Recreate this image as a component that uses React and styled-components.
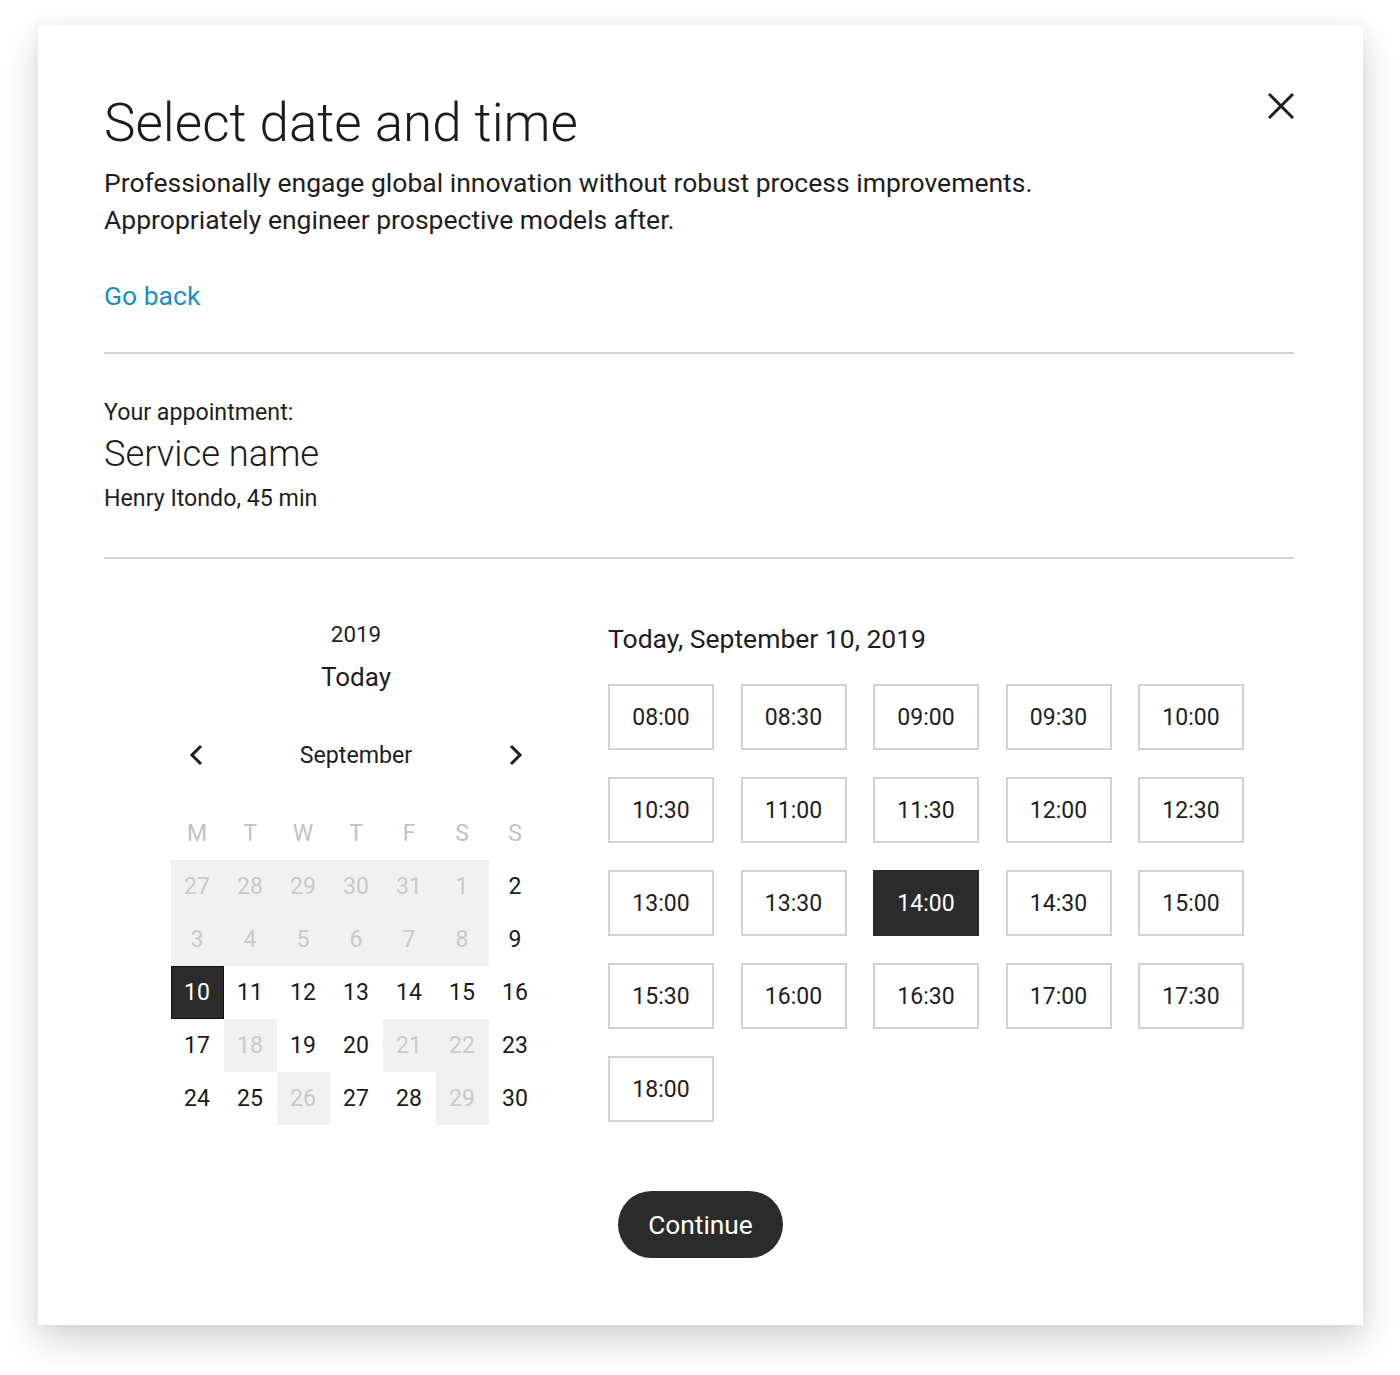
import React from "react";
import styled, { createGlobalStyle } from "styled-components";

const Global = createGlobalStyle`
  html, body { margin: 0; padding: 0; background: #ffffff; }
  body { font-family: Roboto, "Noto Sans", "Liberation Sans", sans-serif; color: #1e1e1e; }
  * { box-sizing: border-box; }
`;

const Page = styled.div`
  padding: 25px 0 50px 38px;
`;

const Card = styled.div`
  width: 1325px;
  background: #ffffff;
  padding: 67px 69px 67px 66px;
  box-shadow: 0 16px 34px rgba(0, 0, 0, 0.16), 0 0 16px rgba(0, 0, 0, 0.06);
  display: flex;
  flex-direction: column;
`;

const Header = styled.div`
  display: flex;
  justify-content: space-between;
  align-items: flex-start;
`;

const Intro = styled.div`
  display: flex;
  flex-direction: column;
`;

const Title = styled.h1`
  margin: 0;
  font-size: 53px;
  line-height: 62px;
  font-weight: 300;
  color: #1c1c1c;
`;

const Lead = styled.p`
  margin: 10px 0 0;
  font-size: 26.5px;
  line-height: 37px;
  font-weight: 400;
  color: #1e1e1e;
`;

const BackLink = styled.a`
  margin-top: 40px;
  font-size: 26.5px;
  line-height: 36px;
  color: #1a8fc4;
  text-decoration: none;
  cursor: pointer;
`;

const CloseButton = styled.button`
  margin-top: 1px;
  width: 26px;
  height: 26px;
  padding: 0;
  border: none;
  background: none;
  cursor: pointer;
  display: flex;
`;

const Divider = styled.hr`
  margin: ${(p) => p.$top}px 0 0;
  border: none;
  height: 2px;
  background: #d3d3d3;
`;

const Appointment = styled.div`
  margin-top: 44px;
  display: flex;
  flex-direction: column;
`;

const Label = styled.div`
  font-size: 23.2px;
  line-height: 28px;
  color: #1e1e1e;
  margin-top: ${(p) => p.$top || 0}px;
`;

const ServiceName = styled.div`
  margin-top: 6px;
  font-size: 36.3px;
  line-height: 44px;
  font-weight: 300;
  color: #1c1c1c;
`;

const Booking = styled.div`
  display: flex;
  align-items: flex-start;
`;

const CalendarColumn = styled.div`
  width: 504px;
  flex-shrink: 0;
  padding-top: 60px;
  display: flex;
  flex-direction: column;
  align-items: center;
`;

const Year = styled.div`
  font-size: 22.4px;
  line-height: 30px;
  color: #1e1e1e;
`;

const TodayLabel = styled.div`
  margin-top: 12px;
  font-size: 26px;
  line-height: 32px;
  color: #1e1e1e;
`;

const MonthNav = styled.div`
  margin-top: 35px;
  width: 371px;
  height: 53px;
  display: grid;
  grid-template-columns: 53px 1fr 53px;
  align-items: center;
`;

const NavButton = styled.button`
  border: none;
  background: none;
  padding: 0;
  height: 53px;
  display: flex;
  align-items: center;
  justify-content: center;
  cursor: pointer;
`;

const MonthName = styled.div`
  text-align: center;
  font-size: 23.2px;
  color: #1e1e1e;
`;

const DayGrid = styled.div`
  margin-top: 26px;
  display: grid;
  grid-template-columns: repeat(7, 53px);
  grid-auto-rows: 53px;
`;

const WeekDay = styled.div`
  display: flex;
  align-items: center;
  justify-content: center;
  font-size: 23px;
  color: #c2c2c2;
`;

const Day = styled.div`
  display: flex;
  align-items: center;
  justify-content: center;
  font-size: 23px;
  cursor: ${(p) => (p.$kind === "off" ? "default" : "pointer")};
  background: ${(p) =>
    p.$kind === "off" ? "#f1f1f1" : p.$kind === "selected" ? "#2b2b2b" : "transparent"};
  color: ${(p) =>
    p.$kind === "off" ? "#c9c9c9" : p.$kind === "selected" ? "#ffffff" : "#1a1a1a"};
  border: ${(p) => (p.$kind === "selected" ? "1px solid #111" : "none")};
`;

const TimeColumn = styled.div`
  flex: 1;
  padding-top: 64px;
  display: flex;
  flex-direction: column;
`;

const TimeHeading = styled.div`
  font-size: 26.5px;
  line-height: 32px;
  color: #1e1e1e;
`;

const SlotGrid = styled.div`
  margin-top: 29px;
  display: grid;
  grid-template-columns: repeat(5, 106px);
  grid-auto-rows: 66px;
  column-gap: 26.5px;
  row-gap: 27px;
`;

const Slot = styled.button`
  padding: 0;
  font-family: inherit;
  font-size: 23px;
  cursor: pointer;
  border: 2px solid ${(p) => (p.$selected ? "#2b2b2b" : "#d2d2d2")};
  background: ${(p) => (p.$selected ? "#2b2b2b" : "#ffffff")};
  color: ${(p) => (p.$selected ? "#ffffff" : "#1e1e1e")};
`;

const Footer = styled.div`
  margin-top: 66px;
  display: flex;
  justify-content: center;
  padding-left: 3px;
`;

const ContinueButton = styled.button`
  width: 165px;
  height: 67px;
  border-radius: 34px;
  border: none;
  background: #2b2b2b;
  color: #ffffff;
  font-family: inherit;
  font-size: 26.3px;
  cursor: pointer;
`;

const Chevron = ({ dir }) => (
  <svg width="20" height="24" viewBox="0 0 20 24" fill="none">
    <path
      d={dir === "left" ? "M14 3 L5 12 L14 21" : "M6 3 L15 12 L6 21"}
      stroke="#1e1e1e"
      strokeWidth="3"
      strokeLinecap="butt"
      strokeLinejoin="miter"
    />
  </svg>
);

const CloseIcon = () => (
  <svg width="26" height="26" viewBox="0 0 26 26">
    <path d="M1 1 L25 25 M25 1 L1 25" stroke="#1e1e1e" strokeWidth="3" />
  </svg>
);

const weekdays = ["M", "T", "W", "T", "F", "S", "S"];

const days = [
  [27, "off"], [28, "off"], [29, "off"], [30, "off"], [31, "off"], [1, "off"], [2, "on"],
  [3, "off"], [4, "off"], [5, "off"], [6, "off"], [7, "off"], [8, "off"], [9, "on"],
  [10, "selected"], [11, "on"], [12, "on"], [13, "on"], [14, "on"], [15, "on"], [16, "on"],
  [17, "on"], [18, "off"], [19, "on"], [20, "on"], [21, "off"], [22, "off"], [23, "on"],
  [24, "on"], [25, "on"], [26, "off"], [27, "on"], [28, "on"], [29, "off"], [30, "on"],
];

const slots = [
  "08:00", "08:30", "09:00", "09:30", "10:00",
  "10:30", "11:00", "11:30", "12:00", "12:30",
  "13:00", "13:30", "14:00", "14:30", "15:00",
  "15:30", "16:00", "16:30", "17:00", "17:30",
  "18:00",
];

export default function App() {
  return (
    <>
      <Global />
      <Page>
        <Card>
          <Header>
            <Intro>
              <Title>Select date and time</Title>
              <Lead>
                Professionally engage global innovation without robust process improvements.
                <br />
                Appropriately engineer prospective models after.
              </Lead>
              <BackLink>Go back</BackLink>
            </Intro>
            <CloseButton aria-label="Close">
              <CloseIcon />
            </CloseButton>
          </Header>

          <Divider $top={38} />

          <Appointment>
            <Label>Your appointment:</Label>
            <ServiceName>Service name</ServiceName>
            <Label $top={8}>Henry Itondo, 45 min</Label>
          </Appointment>

          <Divider $top={45} />

          <Booking>
            <CalendarColumn>
              <Year>2019</Year>
              <TodayLabel>Today</TodayLabel>
              <MonthNav>
                <NavButton aria-label="Previous month">
                  <Chevron dir="left" />
                </NavButton>
                <MonthName>September</MonthName>
                <NavButton aria-label="Next month">
                  <Chevron dir="right" />
                </NavButton>
              </MonthNav>
              <DayGrid>
                {weekdays.map((w, i) => (
                  <WeekDay key={"w" + i}>{w}</WeekDay>
                ))}
                {days.map(([n, kind], i) => (
                  <Day key={i} $kind={kind}>
                    {n}
                  </Day>
                ))}
              </DayGrid>
            </CalendarColumn>

            <TimeColumn>
              <TimeHeading>Today, September 10, 2019</TimeHeading>
              <SlotGrid>
                {slots.map((s) => (
                  <Slot key={s} $selected={s === "14:00"}>
                    {s}
                  </Slot>
                ))}
              </SlotGrid>
            </TimeColumn>
          </Booking>

          <Footer>
            <ContinueButton>Continue</ContinueButton>
          </Footer>
        </Card>
      </Page>
    </>
  );
}
